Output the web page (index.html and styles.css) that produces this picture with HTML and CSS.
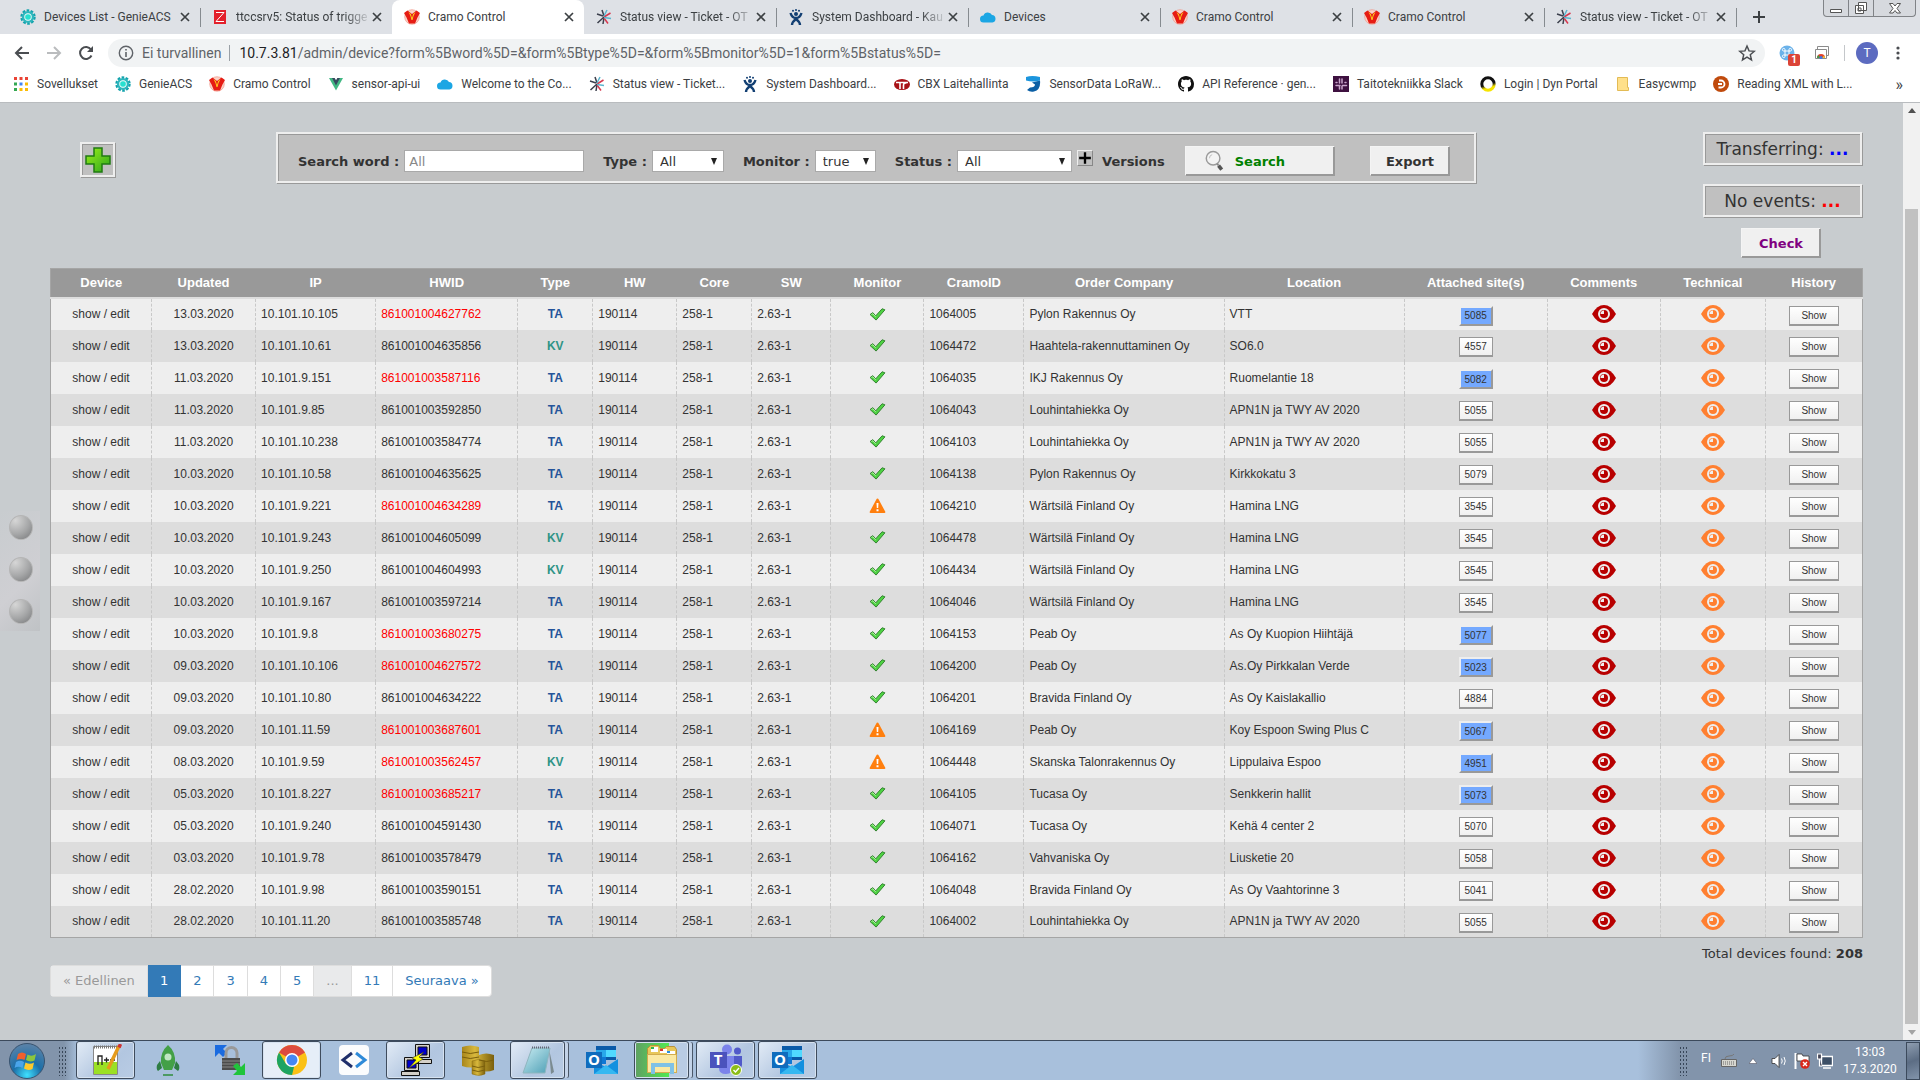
FILE: index.html
```html
<!DOCTYPE html>
<html lang="fi">
<head>
<meta charset="utf-8">
<title>Cramo Control</title>
<link rel="stylesheet" href="styles.css">
</head>
<body>
<svg class="sprite" aria-hidden="true">
  <defs>
    <linearGradient id="g-green" x1="0" y1="0" x2="1" y2="1"><stop offset="0" stop-color="#9bef1a"/><stop offset="1" stop-color="#2ba51c"/></linearGradient>
    <linearGradient id="g-gold" x1="0" y1="0" x2="1" y2="0"><stop offset="0" stop-color="#a8861c"/><stop offset=".4" stop-color="#d9b93c"/><stop offset="1" stop-color="#7a5f0c"/></linearGradient>
    <linearGradient id="g-note" x1="0" y1="0" x2="1" y2="1"><stop offset="0" stop-color="#c9ecf2"/><stop offset="1" stop-color="#4d9fb5"/></linearGradient>
    <radialGradient id="g-orb" cx=".5" cy=".9" r=".9"><stop offset="0" stop-color="#3fe0ff"/><stop offset=".45" stop-color="#1b6fa8"/><stop offset="1" stop-color="#5d83a8"/></radialGradient>
    <linearGradient id="g-dyn" x1=".7" y1="0" x2="1" y2="1"><stop offset=".45" stop-color="#111"/><stop offset=".7" stop-color="#f6e400"/></linearGradient>
  </defs>
  <symbol id="i-gear" viewBox="0 0 16 16"><circle cx="8" cy="8" r="6.400" fill="none" stroke="#14a3ad" stroke-width="2.600" stroke-dasharray="2.600 1.400"/><circle cx="8" cy="8" r="4.800" fill="none" stroke="#2fb6bd" stroke-width="2.600"/><circle cx="8" cy="8" r="3.700" fill="#d8f6f4"/><circle cx="8" cy="8" r="2.800" fill="#27e0d0"/></symbol>
  <symbol id="i-zabbix" viewBox="0 0 16 16"><path fill="#e3202b" d="M2 1h12v14H2z"/><path d="M4 3.500h8l-8 9h8" fill="none" stroke="#fff" stroke-width="1"/></symbol>
  <symbol id="i-cramo" viewBox="0 0 16 16"><circle cx="8" cy="8" r="7.300" fill="#fbd3c8" stroke="#f08b7c" stroke-width=".6"/><path fill="#e61c14" d="M0 4l3.500-2.500L8 5l4.500-3.500L16 4l-2.500 4.500L11 14.500H5L2.500 8.500z"/><path fill="#ffd21e" d="M4.500 3L8 6l3.500-3-2 4L8.500 11h-1L6.500 7z"/><path fill="#e61c14" d="M6.800 5h2.400L8 9z"/></symbol>
  <symbol id="i-otrs" viewBox="0 0 16 16"><g fill="none" stroke-width="1.500"><path stroke="#3b3f4c" d="M8 7L6 1M8 8L1.500 14M8 8.500L7 15M7 7L1 5"/><path stroke="#d63a50" d="M8 8l6.500-4M8 9l4 5.500"/><path stroke="#5cb6cf" d="M8 7l3-6M8 8.500l7 1"/></g></symbol>
  <symbol id="i-jira" viewBox="0 0 16 16"><g fill="none" stroke="#123f73" stroke-width="2.400"><path d="M2.500 4q1.500 5 5.500 5t5.500-5M4 16q0-3 4-6 4 3 4 6"/></g><g fill="#123f73"><circle cx="8" cy="5" r="2"/><circle cx="5" cy="1.800" r="1"/><circle cx="8" cy="1" r="1"/><circle cx="11" cy="1.800" r="1"/></g></symbol>
  <symbol id="i-cloud" viewBox="0 0 16 16"><path fill="#1ba6e4" d="M3.500 13.500a3.500 3.500 0 010-7A4.600 4.600 0 0112 6a3.800 3.800 0 01.5 7.500z"/></symbol>
  <symbol id="i-vue" viewBox="0 0 16 16"><path fill="#41b883" d="M1 2h14L8 14.500z"/><path fill="#35495e" d="M4 2h8L8 9.500z"/><path fill="#fff" d="M6.700 2h2.600L8 4.200z"/></symbol>
  <symbol id="i-apps" viewBox="0 0 16 16"><g fill="#ea4335"><path d="M1 1h3v3H1zM6.500 1h3v3h-3zM12 1h3v3h-3z"/></g><path fill="#34a853" d="M1 6.500h3v3H1zM1 12h3v3H1z"/><path fill="#4285f4" d="M6.500 6.500h3v3h-3z"/><path fill="#fbbc05" d="M12 6.500h3v3h-3zM6.500 12h3v3h-3zM12 12h3v3h-3z"/></symbol>
  <symbol id="i-cbx" viewBox="0 0 16 16"><ellipse cx="8" cy="8.500" rx="8" ry="5.500" fill="#a81216"/><path fill="none" stroke="#fff" stroke-width="1.600" d="M2 6.500h12M6 6.500V13M9.500 13V9.500q0-3 3-2.500"/></symbol>
  <symbol id="i-sensor" viewBox="0 0 16 16"><path fill="#1b95dd" d="M1 1q6-2 14 0v3.500Q8 6.500 1 4.500z"/><path fill="#0b5fa5" d="M7 6.500l8-2q1 9-6 11-4 .8-7-1.500l3-2.500q5 0 5-3z"/></symbol>
  <symbol id="i-github" viewBox="0 0 16 16"><path fill="#111" d="M8 0C3.580 0 0 3.580 0 8c0 3.540 2.290 6.530 5.470 7.590.4.070.55-.17.55-.38 0-.19-.01-.82-.01-1.490-2.010.37-2.530-.49-2.690-.94-.09-.23-.48-.94-.82-1.130-.28-.15-.68-.52-.01-.53.63-.01 1.080.58 1.230.82.72 1.210 1.870.87 2.330.66.07-.52.28-.87.51-1.070-1.780-.2-3.640-.89-3.640-3.950 0-.87.31-1.590.82-2.150-.08-.2-.36-1.020.08-2.120 0 0 .67-.21 2.200.82.64-.18 1.320-.27 2-.27s1.360.09 2 .27c1.530-1.040 2.200-.82 2.200-.82.44 1.100.16 1.920.08 2.120.51.56.82 1.270.82 2.150 0 3.070-1.870 3.750-3.650 3.950.29.25.54.73.54 1.480 0 1.070-.01 1.930-.01 2.200 0 .21.15.46.55.38A8.010 8.010 0 0016 8c0-4.420-3.580-8-8-8z"/></symbol>
  <symbol id="i-slack" viewBox="0 0 16 16"><path fill="#3e1140" d="M0 0h16v16H0z"/><g stroke="#c9a5cb" stroke-width="1.500" stroke-linecap="round"><path d="M6.500 3v4M3 6.500h1M9 3v4M12 6.500h1M6.500 10v3M3 9.500h4M9.500 9.500h4M9 10v3"/></g></symbol>
  <symbol id="i-dyn" viewBox="0 0 16 16"><circle cx="8" cy="8" r="6.200" fill="#fff" stroke="url(#g-dyn)" stroke-width="3"/></symbol>
  <symbol id="i-folder" viewBox="0 0 16 16"><path fill="#ffe08a" stroke="#e3bb55" d="M2.500 1.500h10v10h1v3h-11z"/></symbol>
  <symbol id="i-dz" viewBox="0 0 16 16"><circle cx="8" cy="8" r="8" fill="#c04a0c"/><path fill="none" stroke="#fff" stroke-width="1.800" d="M6 4.500h2a3.500 3.500 0 010 7H5.500M5 8h4"/></symbol>
  <symbol id="i-x" viewBox="0 0 10 10"><path d="M1 1l8 8M9 1L1 9" stroke="#3c4043" stroke-width="1.700"/></symbol>
  <symbol id="i-check" viewBox="0 0 18 14"><path d="M1 7l3-2 3 3.500L14 .8l3 1.200L7.500 13z" fill="#4fd243" stroke="#2b7d28" stroke-width="1"/><path d="M2.500 7l1.500-.8L7 9.500" fill="none" stroke="#b8f5a8" stroke-width="1"/></symbol>
  <symbol id="i-warn" viewBox="0 0 16 16"><path fill="#ff7f0e" d="M8 .5q.8 0 1.200.9l6.600 12.400q.3 1.200-.9 1.200H1.100q-1.200 0-.9-1.200L6.800 1.400Q7.200.5 8 .5z"/><path fill="#fff" d="M7 5h2l-.3 5H7.300zM7 11.200h2v2H7z"/></symbol>
  <symbol id="i-eye" viewBox="0 0 24 18"><path fill="currentColor" d="M0 9Q5 0 12 0t12 9q-5 9-12 9T0 9z"/><circle cx="12" cy="9" r="6" fill="#eee"/><circle cx="12" cy="9" r="4" fill="currentColor"/><path fill="#eee" d="M12 9V5.500A3.500 3.500 0 008.500 9z"/></symbol>
  <symbol id="i-outlook" viewBox="0 0 32 30"><path fill="#0a5aa8" d="M10 1h20v14H10z"/><path fill="#28a8ea" d="M10 5h10v7H10z"/><path fill="#50d9ff" d="M20 5h10v7H20z"/><path fill="#0f78d4" d="M10 12h10v7H10z"/><path fill="#1490df" d="M8 16l12 6 12-8v15H8z"/><path fill="#35b8f1" d="M8 29l12-9 12 9z"/><path fill="#0f6cbd" d="M0 7h16v16H0z"/></symbol>
</svg>

<header class="chrome">
  <div class="tabstrip">
    <ul class="tabs">
      <li class="tab"><svg class="ico"><use href="#i-gear"/></svg><span class="tab-name">Devices List - GenieACS</span><button class="close" aria-label="Close tab"><svg><use href="#i-x"/></svg></button></li>
      <li class="tab"><svg class="ico"><use href="#i-zabbix"/></svg><span class="tab-name fade">ttccsrv5: Status of trigge</span><button class="close" aria-label="Close tab"><svg><use href="#i-x"/></svg></button></li>
      <li class="tab tab-active"><svg class="ico"><use href="#i-cramo"/></svg><span class="tab-name">Cramo Control</span><button class="close" aria-label="Close tab"><svg><use href="#i-x"/></svg></button></li>
      <li class="tab"><svg class="ico"><use href="#i-otrs"/></svg><span class="tab-name fade">Status view - Ticket - OT</span><button class="close" aria-label="Close tab"><svg><use href="#i-x"/></svg></button></li>
      <li class="tab"><svg class="ico"><use href="#i-jira"/></svg><span class="tab-name fade">System Dashboard - Kau</span><button class="close" aria-label="Close tab"><svg><use href="#i-x"/></svg></button></li>
      <li class="tab"><svg class="ico"><use href="#i-cloud"/></svg><span class="tab-name">Devices</span><button class="close" aria-label="Close tab"><svg><use href="#i-x"/></svg></button></li>
      <li class="tab"><svg class="ico"><use href="#i-cramo"/></svg><span class="tab-name">Cramo Control</span><button class="close" aria-label="Close tab"><svg><use href="#i-x"/></svg></button></li>
      <li class="tab"><svg class="ico"><use href="#i-cramo"/></svg><span class="tab-name">Cramo Control</span><button class="close" aria-label="Close tab"><svg><use href="#i-x"/></svg></button></li>
      <li class="tab"><svg class="ico"><use href="#i-otrs"/></svg><span class="tab-name fade">Status view - Ticket - OT</span><button class="close" aria-label="Close tab"><svg><use href="#i-x"/></svg></button></li>
    </ul>
    <button class="newtab" aria-label="New tab"><svg viewBox="0 0 12 12"><path d="M6 0v12M0 6h12" stroke="#3c4043" stroke-width="2"/></svg></button>
    <div class="wincontrols">
      <button aria-label="Minimize"><svg viewBox="0 0 14 14"><path d="M1.500 8.500h11v3h-11z" fill="#fff" stroke="#555"/></svg></button>
      <button aria-label="Restore"><svg viewBox="0 0 14 14"><path d="M4.500 1.500h8v8h-8zM1.500 4.500h8v8h-8z" fill="#fff" stroke="#555"/><path d="M4 7h3v3H4z" fill="none" stroke="#555"/></svg></button>
      <button class="winclose" aria-label="Close"><svg viewBox="0 0 14 14"><path d="M1.500 2.500h3.500l2 2.500 2-2.500h3.500L9 7.500l3.500 4.500H9L7 9.500 5 12H1.500L5 7.500z" fill="#fff" stroke="#555"/></svg></button>
    </div>
  </div>
  <div class="toolbar">
    <button class="nav" aria-label="Back"><svg viewBox="0 0 16 16"><path d="M15 8H2M8 2L2 8l6 6" fill="none" stroke="#4a4d51" stroke-width="2"/></svg></button>
    <button class="nav" aria-label="Forward"><svg viewBox="0 0 16 16"><path d="M1 8h13M8 2l6 6-6 6" fill="none" stroke="#babcbe" stroke-width="2"/></svg></button>
    <button class="nav" aria-label="Reload"><svg viewBox="0 0 16 16"><path d="M13.500 10.500A6 6 0 1113 4.500" fill="none" stroke="#4a4d51" stroke-width="2"/><path fill="#4a4d51" d="M15 1v6H9z"/></svg></button>
    <div class="omnibox">
      <svg class="info" viewBox="0 0 16 16"><circle cx="8" cy="8" r="6.700" fill="none" stroke="#5f6368" stroke-width="1.400"/><path d="M7.200 7h1.600v5H7.200zM7.200 4h1.600v1.600H7.200z" fill="#5f6368"/></svg>
      <span class="secure">Ei turvallinen</span>
      <span class="url"><b>10.7.3.81</b>/admin/device?form%5Bword%5D=&amp;form%5Btype%5D=&amp;form%5Bmonitor%5D=1&amp;form%5Bstatus%5D=</span>
      <button class="star" aria-label="Bookmark"><svg viewBox="0 0 16 16"><path d="M8 1.800l1.800 4.300 4.700.4-3.600 3 1.100 4.600L8 11.700l-4 2.400 1.100-4.600-3.600-3 4.700-.4z" fill="none" stroke="#4a4d51" stroke-width="1.300"/></svg></button>
    </div>
    <button class="ext" aria-label="Extension"><svg viewBox="0 0 16 16"><circle cx="8" cy="8" r="7.500" fill="#6bb2ea"/><path d="M6 6h4v4H6zM6 6H4.500A1.300 1.300 0 116 4.500zM10 6V4.500A1.300 1.300 0 1111.500 6zM10 10h1.500a1.300 1.300 0 11-1.500 1.500zM6 10v1.500A1.300 1.300 0 114.500 10z" fill="none" stroke="#fff"/></svg><span class="badge">1</span></button>
    <button class="ext" aria-label="Capture"><svg viewBox="0 0 16 16"><path d="M3.500 1.500h11v9h-11z" fill="#fff" stroke="#8b8b8b"/><path d="M1.500 4.500h11v9h-11z" fill="#fff" stroke="#8b8b8b"/><path d="M3 13a4 4 0 018 0z" fill="#e0432f"/><path d="M3 13a4 4 0 011.500-3L6 13z" fill="#3c9f4a"/><path d="M11 13a4 4 0 00-1-2.500L8 13z" fill="#f3c12b"/><circle cx="7" cy="12.500" r="1.500" fill="#3b78e7"/></svg></button>
    <span class="divider"></span>
    <button class="avatar">T</button>
    <button class="ext" aria-label="Menu"><svg viewBox="0 0 16 16"><g fill="#4a4d51"><circle cx="8" cy="3" r="1.600"/><circle cx="8" cy="8" r="1.600"/><circle cx="8" cy="13" r="1.600"/></g></svg></button>
  </div>
  <nav class="bookmarks">
    <a href="#"><svg class="ico"><use href="#i-apps"/></svg>Sovellukset</a>
    <a href="#"><svg class="ico"><use href="#i-gear"/></svg>GenieACS</a>
    <a href="#"><svg class="ico"><use href="#i-cramo"/></svg>Cramo Control</a>
    <a href="#"><svg class="ico"><use href="#i-vue"/></svg>sensor-api-ui</a>
    <a href="#"><svg class="ico"><use href="#i-cloud"/></svg>Welcome to the Co...</a>
    <a href="#"><svg class="ico"><use href="#i-otrs"/></svg>Status view - Ticket...</a>
    <a href="#"><svg class="ico"><use href="#i-jira"/></svg>System Dashboard...</a>
    <a href="#"><svg class="ico"><use href="#i-cbx"/></svg>CBX Laitehallinta</a>
    <a href="#"><svg class="ico"><use href="#i-sensor"/></svg>SensorData LoRaW...</a>
    <a href="#"><svg class="ico"><use href="#i-github"/></svg>API Reference · gen...</a>
    <a href="#"><svg class="ico"><use href="#i-slack"/></svg>Taitotekniikka Slack</a>
    <a href="#"><svg class="ico"><use href="#i-dyn"/></svg>Login | Dyn Portal</a>
    <a href="#"><svg class="ico"><use href="#i-folder"/></svg>Easycwmp</a>
    <a href="#"><svg class="ico"><use href="#i-dz"/></svg>Reading XML with L...</a>
    <button class="more" aria-label="More bookmarks">»</button>
  </nav>
</header>

<div class="viewport">
  <main class="page">
    <div class="top">
      <a class="add ridge" href="#" aria-label="Add device"><svg viewBox="0 0 26 26"><path d="M9 1h8v8h8v8h-8v8H9v-8H1V9h8z" fill="url(#g-green)" stroke="#1f7a12" stroke-width="1.500"/></svg></a>
      <form class="filters ridge">
        <label for="word">Search word :</label><input id="word" class="field word" type="text" placeholder="All">
        <label for="type">Type :</label><select id="type" class="field type"><option>All</option></select>
        <label for="monitor">Monitor :</label><select id="monitor" class="field monitor"><option>true</option></select>
        <label for="status">Status :</label><select id="status" class="field status"><option>All</option></select>
        <button class="plus" type="button" aria-label="Show versions"><svg viewBox="0 0 12 12"><path d="M6 1v10M1 6h10" stroke="#000" stroke-width="2"/></svg></button>
        <span class="versions">Versions</span>
        <button class="btn search" type="button"><svg viewBox="0 0 22 24"><circle cx="10" cy="9" r="7.500" fill="#f4f4f4" stroke="#9a9a9a" stroke-width="1.600"/><path d="M6 9a4 4 0 013-4" stroke="#bbb" fill="none"/><path d="M14.500 15l1.500 2" stroke="#888" stroke-width="2"/><path d="M16 17l3.500 4.500" stroke="#555" stroke-width="4"/></svg>Search</button>
        <button class="btn export" type="button">Export</button>
      </form>
      <aside class="side">
        <div class="stat ridge">Transferring: <b class="blue">...</b></div>
        <div class="stat ridge">No events: <b class="red">...</b></div>
        <button class="btn check" type="button">Check</button>
      </aside>
    </div>
    <table class="devices">
      <colgroup><col class="w101"><col class="w104"><col class="w120"><col class="w142"><col class="w75"><col class="w84"><col class="w75"><col class="w79"><col class="w93"><col class="w100"><col class="w200"><col class="w180"><col class="w143"><col class="w113"><col class="w105"><col class="w97"></colgroup>
      <thead><tr><th>Device</th><th>Updated</th><th>IP</th><th>HWID</th><th>Type</th><th>HW</th><th>Core</th><th>SW</th><th>Monitor</th><th>CramoID</th><th>Order Company</th><th>Location</th><th>Attached site(s)</th><th>Comments</th><th>Technical</th><th>History</th></tr></thead>
      <tbody id="rows"></tbody>
    </table>
    <div class="total">Total devices found: <b>208</b></div>
    <nav class="pager" aria-label="Pages">
      <span class="off">« Edellinen</span><a class="on" href="#">1</a><a href="#">2</a><a href="#">3</a><a href="#">4</a><a href="#">5</a><span class="off">...</span><a href="#">11</a><a href="#">Seuraava »</a>
    </nav>
    <div class="rivets"><i></i><i></i><i></i></div>
  </main>
  <div class="scroll"><i class="up"></i><div class="thumb"></div><i class="down"></i></div>
</div>

<footer class="taskbar">
  <button class="orb" aria-label="Start"><svg viewBox="0 0 36 36"><circle cx="18" cy="18" r="17.500" fill="url(#g-orb)" stroke="#39536f"/><path fill="#f0602c" d="M9 11q4-3 8 0l-1.500 6q-4-2-8 0z"/><path fill="#8cc63e" d="M18.500 11.500q4 2.500 8.500-.5l-1.500 6.500q-4.500 2-8.500-.5z"/><path fill="#4aa5ea" d="M7 19q4-2.500 8 0l-1.500 6q-4-2.500-8 0z"/><path fill="#fdc92c" d="M16.500 19.500q4.500 2.500 8.500 0L23.500 26q-4.500 2-8.500-.5z"/></svg></button>
  <i class="grip"></i>
  <div class="tasks">
    <button class="task open" aria-label="Notepad++"><svg viewBox="0 0 32 32"><path fill="#fff" stroke="#888" d="M3.500 2.500h24v28h-24z"/><path d="M4 18l23 0v12H4z" fill="#9be024"/><path d="M4 3h24" stroke="#777" stroke-width="3" stroke-dasharray="1 1"/><path d="M8 21v-9h4v9M14 16h5M16.500 13.500v5M20 16h5M22.500 13.500v5" fill="none" stroke="#222" stroke-width="1.300"/><path d="M29 2L18 25" stroke="#e59b1c" stroke-width="3.500"/><path d="M30.500 0L29 3.500" stroke="#c33" stroke-width="3.500"/></svg></button>
    <button class="task" aria-label="Rocket"><svg viewBox="0 0 32 32"><path fill="#43a047" d="M16 1q8 7 7 18l-3 7h-8l-3-7Q8 8 16 1z"/><path fill="#2e7d43" d="M8 17l-3 4q-1 4 1 6l4-3zM24 17l3 4q1 4-1 6l-4-3z"/><circle cx="16" cy="13" r="3.500" fill="#bfe6c2"/><path stroke="#4d9a63" stroke-width="2" d="M11 31h10"/></svg></button>
    <button class="task" aria-label="WinSCP"><svg viewBox="0 0 32 32"><path fill="#1a6be0" d="M1 1h12l-4 4 4 4-4 4-4-4-4 4z"/><path d="M12 16V9a5 5 0 0111 0v7" fill="none" stroke="#999" stroke-width="3"/><path fill="#4c4c4c" d="M8 14h18v12H8z"/><path stroke="#888" d="M8 17h18M8 20h18M8 23h18"/><path fill="#1fc43a" d="M31 31H19l4-4-4-5 4-3 4 4 4-4z"/></svg></button>
    <button class="task open lit" aria-label="Chrome"><svg viewBox="0 0 32 32"><circle cx="16" cy="16" r="15" fill="#fbc116"/><path fill="#dd4b3e" d="M16 16L3 8.500a15 15 0 0126 0z"/><path fill="#1da462" d="M16 31A15 15 0 013 8.500L10 20l8 3z"/><circle cx="16" cy="16" r="7" fill="#fff"/><circle cx="16" cy="16" r="5.500" fill="#4587f3"/></svg></button>
    <button class="task" aria-label="Code"><svg viewBox="0 0 32 32"><rect x="1" y="1" width="30" height="30" rx="4" fill="#fbfcfd"/><path d="M14 9l-9 7 9 7" fill="none" stroke="#1f2f6b" stroke-width="3"/><path d="M18 9l9 7-9 7" fill="none" stroke="#2e8ad8" stroke-width="3"/></svg></button>
    <button class="task open" aria-label="PuTTY"><svg viewBox="0 0 32 32"><g fill="#d4d0c8" stroke="#111"><path d="M15.500.5h14v13h-14zM4.500 13.500h14v13h-14zM13.500 15.500h18v4h-18zM1.500 27.500h18v4h-18z"/></g><path fill="#00c" stroke="#111" d="M18 3h9v8h-9zM7 16h9v8H7z"/><path fill="#ff0" stroke="#333" stroke-width=".6" d="M24 8L12 14l4 2-7 8 14-9-4-2z"/></svg></button>
    <button class="task" aria-label="Database"><svg viewBox="0 0 32 32"><path fill="url(#g-gold)" d="M0 3q8-3 17 0v19q-8 3-17 0zM17 11q7-3 15 0v15q-8 3-15 0z"/><path fill="url(#g-gold)" stroke="#8a6d12" stroke-width=".5" d="M10 17q6-3 13 0v13q-6 3-13 0z"/><path stroke="#7a5f0c" fill="none" d="M0 8q8 3 17 0M0 13q8 3 17 0M10 22q6 3 13 0M10 26q6 3 13 0M17 16q8 3 15 0"/></svg></button>
    <button class="task open stack" aria-label="Notepad"><svg viewBox="0 0 32 32"><path fill="#7b8b90" d="M27 5l5 23-3 2z"/><path fill="url(#g-note)" stroke="#8fb6bf" d="M10 4h18l-5 25H1z"/><path stroke="#667" stroke-width="2" stroke-dasharray="1 1" d="M10 3.500h18"/></svg></button>
    <button class="task" aria-label="Outlook"><svg viewBox="0 0 32 30"><use href="#i-outlook"/><text x="8" y="20" class="logo-letter">O</text></svg></button>
    <button class="task open busy stack" aria-label="Explorer"><svg viewBox="0 0 32 32"><path fill="#e8c75a" stroke="#b9923a" d="M1.500 4.500l3-3h8l2 3h4l2-2h8l2 3v23h-29z"/><path fill="#fff" d="M5 3h7v5H5zM14 5h7v4h-7zM21 7h8v4h-8z"/><path fill="#2eb34c" d="M5 3h3v2H5z"/><path fill="#d8362c" d="M14 5h3v2h-3z"/><path fill="#2b8fe0" d="M21 7h3v2h-3z"/><path fill="#fbe9a3" stroke="#d3ad4e" d="M1.500 10.500l29 0v18h-29z"/><path fill="none" stroke="#7fc1e6" stroke-width="4" d="M7 30v-9h19v9"/></svg></button>
    <button class="task open" aria-label="Teams"><svg viewBox="0 0 32 32"><circle cx="17" cy="5.500" r="5" fill="#7b83eb"/><circle cx="27.500" cy="7" r="3.500" fill="#5059c9"/><path fill="#5059c9" d="M22 12h10v9q-1 6-6 6z"/><path fill="#7b83eb" d="M10 12h14v10q-1 8-8 8t-7-6z"/><path fill="#4b53bc" d="M0 8h17v16H0z"/><text x="8" y="21" class="logo-letter">T</text><circle cx="26" cy="26" r="5.500" fill="#8cbd18" stroke="#fff"/><path d="M23.500 26l2 2 3.500-4" fill="none" stroke="#fff" stroke-width="1.400"/></svg></button>
    <button class="task open" aria-label="Outlook mail"><svg viewBox="0 0 32 30"><use href="#i-outlook"/><text x="8" y="20" class="logo-letter">O</text></svg></button>
  </div>
  <div class="tray">
    <i class="grip"></i>
    <span class="lang">FI</span>
    <svg class="kbd" viewBox="0 0 16 14"><path d="M4 5q0-3 4-3t5-2" fill="none" stroke="#777"/><path d="M.5 5.500h15v7H.5z" fill="#d7d7d0" stroke="#666"/><path d="M2 8h12M2 10h12" stroke="#666" stroke-dasharray="1 1"/></svg>
    <svg class="arrow" viewBox="0 0 8 6"><path d="M4 .5L8 5.500H0z" fill="#fff" stroke="#445" stroke-width=".5"/></svg>
    <svg class="tico" viewBox="0 0 16 16"><path d="M1 5.500h3l4-4v13l-4-4H1z" fill="#fff" stroke="#333" stroke-width=".8"/><path d="M10.500 5.500q1.500 2.500 0 5M13 4q2.500 4 0 8" fill="none" stroke="#fff"/></svg>
    <svg class="tico" viewBox="0 0 16 16"><path d="M1.500 0v16" stroke="#fff" stroke-width="2"/><path d="M3 1h5l1 2h6v7H9L8 8H3z" fill="#fff" stroke="#333" stroke-width=".8"/><circle cx="11" cy="11" r="4.800" fill="#d8281c"/><path d="M9 9l4 4M13 9l-4 4" stroke="#fff" stroke-width="1.400"/></svg>
    <svg class="tico" viewBox="0 0 16 16"><path d="M4.500 3.500h11v9h-11z" fill="#3d4f66" stroke="#fff" stroke-width="1.400"/><path d="M6 15h8" stroke="#fff" stroke-width="1.500"/><path d="M.5 1h4v5h-4zM2.500 6v7H5" fill="#445" stroke="#fff" stroke-width="1.200"/></svg>
    <div class="clock"><span>13:03</span><span>17.3.2020</span></div>
    <button class="desk" aria-label="Show desktop"></button>
  </div>
</footer>
<script src="script.js"></script>
</body>
</html>
```
FILE: styles.css
```css
* { box-sizing: border-box; }
html, body { height: 100%; margin: 0; }
body {
  display: flex;
  flex-direction: column;
  overflow: hidden;
  font-family: "DejaVu Sans", Verdana, sans-serif;
  color: #333;
  background: #c8cccf;
}
button { padding: 0; border: 0; background: none; font: inherit; color: inherit; }
a { color: inherit; text-decoration: none; }
svg { display: block; }
ul { margin: 0; padding: 0; list-style: none; }
.sprite { position: absolute; width: 0; height: 0; }
.ico { width: 16px; height: 16px; flex: none; }

/* Browser window */
.chrome { flex: none; font-family: Roboto, "Open Sans", sans-serif; font-size: 12px; color: #3c4043; background: #fff; border-bottom: 1px solid #b9bcbf; }
.tabstrip { display: flex; height: 34px; padding-left: 8px; background: #dee1e6; }
.tabs { display: flex; }
.tab { position: relative; display: flex; align-items: center; width: 192px; padding: 0 10px 0 12px; }
.tab::after { content: ""; position: absolute; right: -1px; top: 8px; width: 1px; height: 19px; background: #868b90; }
.tab:has(+ .tab-active)::after, .tab-active::after { display: none; }
.tab-active { background: #fff; border-radius: 8px 8px 0 0; }
.tab-name { flex: 1; margin-left: 8px; white-space: nowrap; }
.fade { -webkit-mask-image: linear-gradient(to right, #000 108px, transparent 136px); mask-image: linear-gradient(to right, #000 108px, transparent 136px); }
.close { width: 10px; height: 10px; }
.close svg { width: 10px; height: 10px; }
.newtab { width: 12px; margin-left: 17px; }
.newtab svg { width: 12px; height: 12px; }
.wincontrols { display: flex; height: 17px; margin: 0 4px 0 auto; border: 1px solid #808387; border-top: 0; border-radius: 0 0 4px 4px; background: #d6d9de; }
.wincontrols button { display: flex; align-items: center; justify-content: center; width: 25px; border-right: 1px solid #808387; }
.wincontrols .winclose { width: 41px; border: 0; }
.wincontrols svg { width: 14px; height: 14px; }

.toolbar { display: flex; align-items: center; height: 37px; padding-right: 14px; }
.nav { width: 16px; margin-left: 16px; }
.nav:first-child { margin-left: 14px; }
.nav svg { width: 16px; height: 16px; }
.omnibox { display: flex; flex: 1; align-items: center; height: 28px; margin: 0 14px 0 14px; padding: 0 9px 0 10px; border-radius: 14px; background: #f1f3f4; font-size: 14px; color: #5f6368; }
.info { width: 16px; height: 16px; margin-right: 8px; }
.secure { padding-right: 8px; border-right: 1px solid #9aa0a6; }
.url { flex: 1; margin-left: 9px; }
.url b { font-weight: 400; color: #202124; }
.star svg { width: 18px; height: 18px; }
.ext { position: relative; width: 16px; margin: 0 11px 0 0; }
.ext:last-child { margin: 0 0 0 12px; }
.ext + .ext { margin: 0 14px 0 8px; }
.ext svg { width: 16px; height: 16px; }
.badge { position: absolute; left: 9px; top: 9px; width: 12px; border-radius: 2px; background: #db4437; color: #fff; font-size: 10px; font-weight: 700; line-height: 12px; }
.divider { width: 1px; height: 16px; background: #c4c7ca; margin-right: 11px; }
.avatar { width: 22px; height: 22px; border-radius: 50%; background: #5c6bc0; color: #fff; }

.bookmarks { display: flex; align-items: center; gap: 17px; height: 31px; padding: 0 17px 5px 13px; white-space: nowrap; }
.bookmarks a { display: flex; align-items: center; gap: 8px; }
.more { margin-left: auto; font-size: 16px; }

/* Page */
.viewport { display: flex; flex: 1; min-height: 0; }
.page { position: relative; flex: 1; padding: 29px 40px 0 50px; font-size: 13px; }
.ridge { border: 2px solid #eee; background: #c0c0c0; box-shadow: 1px 1px 0 #999, inset 1px 1px 0 #999; }
.top { display: flex; align-items: flex-start; justify-content: space-between; height: 136px; }
.add { display: flex; align-items: center; justify-content: center; width: 35px; height: 35px; margin: 10px 0 0 30px; }
.add svg { width: 26px; height: 26px; }
.filters { display: flex; align-items: center; width: 1200px; height: 51px; padding: 7px 24px 0 20px; font-weight: 700; margin-left: -66px; }
.field { height: 22px; margin-right: 19px; margin-left: 5px; padding: 0 4px; border: 1px solid #a9a9a9; border-radius: 0; background: #fff; font: 13px "DejaVu Sans", Verdana, sans-serif; color: #333; }
.field::placeholder { color: #888; }
select.field { appearance: none; padding-left: 7px; background: #fff url('data:image/svg+xml,<svg xmlns="http://www.w3.org/2000/svg" width="6" height="7"><path d="M0 0h6L3 7z" fill="%23222"/></svg>') no-repeat right 6px center; }
.word { width: 180px; }
.type { width: 72px; }
.monitor { width: 61px; }
.status { width: 115px; margin-right: 5px; }
.plus { width: 16px; height: 16px; margin: 0 9px 6px 0; border: 1px solid; border-color: #eee #888 #888 #eee; }
.plus svg { width: 14px; height: 14px; }
.btn { height: 30px; border: 1px solid; border-color: #f4f4f4 #999 #999 #f4f4f4; box-shadow: inset -1px -1px 0 #999; background: #f0f0f0; font-size: 13px; font-weight: 700; }
.search { display: flex; align-items: center; gap: 11px; width: 150px; margin-left: 20px; padding-left: 18px; color: green; }
.search svg { width: 20px; height: 22px; }
.export { width: 80px; margin-left: auto; }
.side { display: flex; flex-direction: column; align-items: flex-end; width: 160px; }
.stat { width: 159px; height: 33px; margin: 0 1px 19px 0; font-size: 17px; line-height: 31px; text-align: center; }
.stat + .stat { margin-bottom: 11px; }
.blue { color: #00f; }
.red { color: red; }
.check { width: 80px; margin-right: 42px; color: purple; }

.devices { width: 100%; table-layout: fixed; border-collapse: collapse; border: 1px solid #a5a5a5; font-family: "Liberation Sans", Arial, sans-serif; font-size: 12px; }
.w75 { width: 75px; } .w79 { width: 79px; } .w84 { width: 84px; } .w93 { width: 93px; } .w97 { width: 97px; }
.w100 { width: 100px; } .w101 { width: 101px; } .w104 { width: 104px; } .w105 { width: 105px; } .w113 { width: 113px; }
.w120 { width: 120px; } .w142 { width: 142px; } .w143 { width: 143px; } .w180 { width: 180px; } .w200 { width: 200px; }
.devices th { height: 29px; padding: 0; background: #999; color: #fff; border-bottom: 2px solid #ddd; font-size: 13px; }
.devices td { height: 32px; padding: 0 5px; border-right: 1px dashed #c8c8c8; white-space: nowrap; }
.devices td:last-child { border-right: 0; }
.devices tbody tr { background: #eee; }
.devices tbody tr:nth-child(even) { background: #ddd; }
.devices .mid { text-align: center; }
.devices td svg { margin: 0 auto; }
.hot { color: red; }
.ta { color: #25549a; }
.kv { color: #2f9486; }
.yes { width: 17px; height: 13px; }
.warn { width: 17px; height: 16px; }
.eye { width: 24px; height: 18px; }
.comment { color: #b80000; }
.tech { color: #ff7f30; }
.mini { height: 20px; margin-top: 3px; border: 1px solid #999; border-bottom-width: 2px; background: linear-gradient(#fff, #f0f0f0); font-size: 10px; }
.site { width: 34px; }
.show { width: 50px; }
.linked { border: 2px solid; border-color: #eee #999 #999 #eee; background: #74a9ff; }

.total { margin-top: 7px; text-align: right; line-height: 18px; }
.pager { display: flex; width: max-content; margin-top: 2px; border: 1px solid #ddd; border-radius: 4px; background: #fff; color: #337ab7; line-height: 30px; }
.pager > * { padding: 0 12px; border-right: 1px solid #ddd; }
.pager > :last-child { border-right: 0; }
.pager .off { background: #e9eaeb; color: #999; }
.pager .on { margin: -1px 0; background: #337ab7; border-color: #337ab7; color: #fff; line-height: 32px; }
.rivets { position: absolute; left: 0; top: 408px; display: flex; flex-direction: column; justify-content: space-between; width: 40px; height: 120px; padding: 4px 8px 7px 9px; background: linear-gradient(135deg, #c8cccf, #cfcfd3 60%, #bfc2c5); }
.rivets i { width: 24px; height: 25px; border-radius: 50%; border: 1px solid #b5b5b5; background: radial-gradient(circle at 25% 20%, #d6d6d6, #a6a7a8 55%, #77787a); }

.scroll { display: flex; flex-direction: column; align-items: center; width: 17px; padding: 5px 0; background: #f1f1f1; }
.scroll .up, .scroll .down { border: 4px solid transparent; border-top: 0; border-bottom: 5px solid #505050; }
.scroll .down { border-bottom: 0; border-top: 5px solid #a3a3a3; margin-top: auto; }
.thumb { flex: 1; width: 13px; margin: 96px 0 6px; background: #c1c1c1; }

/* Taskbar */
.taskbar { display: flex; flex: none; height: 40px; border-top: 1px solid #3c4a5c; background: linear-gradient(90deg, #8294ab 64px, #a8c0dc 78px, #a8c0dc calc(100% - 282px), #8294ab calc(100% - 240px)); }
.orb { width: 36px; margin-left: 9px; }
.orb svg { width: 36px; height: 36px; }
.grip { flex: none; width: 10px; height: 30px; background: radial-gradient(circle, #38475a 1px, transparent 1px) 0 0 / 3px 4px; align-self: center; }
.taskbar > .grip { margin: 0 8px 0 13px; }
.tasks { display: flex; gap: 3px; }
.task { display: flex; align-items: center; justify-content: center; width: 59px; height: 38px; }
.task svg { width: 32px; height: 32px; }
.open { border: 1px solid #3f4c5d; border-radius: 3px; background: linear-gradient(135deg, #e2ebf6, #b2c6e0 60%, #b9cce4); box-shadow: inset 0 0 0 1px #d6e2f0; }
.lit { background: #e6eef8; }
.stack { width: 55px; margin-right: 4px; box-shadow: inset 0 0 0 1px #d6e2f0, 4px 0 0 -1px #c3d3e8, 5px 0 0 -1px #4b5869; }
.busy { background: linear-gradient(90deg, #5f9f62, #52e852 64%, #b9cce4 64%); }
.logo-letter { font: 700 15px "Open Sans", sans-serif; fill: #fff; text-anchor: middle; }
.tray { display: flex; align-items: center; margin-left: auto; font-family: Roboto, sans-serif; font-size: 12px; color: #fff; }
.tray .grip { margin-right: 12px; }
.lang { margin: 0 10px 5px 0; }
.kbd { width: 16px; height: 14px; margin-right: 12px; }
.arrow { width: 8px; height: 6px; margin-right: 14px; }
.tico { width: 16px; height: 16px; margin-right: 7px; }
.clock { display: flex; flex-direction: column; align-items: center; width: 56px; margin: 0 8px 0 2px; line-height: 17px; }
.desk { width: 14px; height: 38px; border: 1px solid #3c4a5c; background: linear-gradient(160deg, #8e9db0, #5c6d84 50%, #8294ab); }
```
FILE: script.js
```js
// date, IP, HWID, red HWID, type, monitor ok, Cramo id, company, location, site, linked site
const devices = [
  ["13.03.2020", "10.101.10.105", "861001004627762", 1, "TA", 1, "1064005", "Pylon Rakennus Oy", "VTT", "5085", 1],
  ["13.03.2020", "10.101.10.61", "861001004635856", 0, "KV", 1, "1064472", "Haahtela-rakennuttaminen Oy", "SO6.0", "4557", 0],
  ["11.03.2020", "10.101.9.151", "861001003587116", 1, "TA", 1, "1064035", "IKJ Rakennus Oy", "Ruomelantie 18", "5082", 1],
  ["11.03.2020", "10.101.9.85", "861001003592850", 0, "TA", 1, "1064043", "Louhintahiekka Oy", "APN1N ja TWY AV 2020", "5055", 0],
  ["11.03.2020", "10.101.10.238", "861001003584774", 0, "TA", 1, "1064103", "Louhintahiekka Oy", "APN1N ja TWY AV 2020", "5055", 0],
  ["10.03.2020", "10.101.10.58", "861001004635625", 0, "TA", 1, "1064138", "Pylon Rakennus Oy", "Kirkkokatu 3", "5079", 0],
  ["10.03.2020", "10.101.9.221", "861001004634289", 1, "TA", 0, "1064210", "Wärtsilä Finland Oy", "Hamina LNG", "3545", 0],
  ["10.03.2020", "10.101.9.243", "861001004605099", 0, "KV", 1, "1064478", "Wärtsilä Finland Oy", "Hamina LNG", "3545", 0],
  ["10.03.2020", "10.101.9.250", "861001004604993", 0, "KV", 1, "1064434", "Wärtsilä Finland Oy", "Hamina LNG", "3545", 0],
  ["10.03.2020", "10.101.9.167", "861001003597214", 0, "TA", 1, "1064046", "Wärtsilä Finland Oy", "Hamina LNG", "3545", 0],
  ["10.03.2020", "10.101.9.8", "861001003680275", 1, "TA", 1, "1064153", "Peab Oy", "As Oy Kuopion Hiihtäjä", "5077", 1],
  ["09.03.2020", "10.101.10.106", "861001004627572", 1, "TA", 1, "1064200", "Peab Oy", "As.Oy Pirkkalan Verde", "5023", 1],
  ["09.03.2020", "10.101.10.80", "861001004634222", 0, "TA", 1, "1064201", "Bravida Finland Oy", "As Oy Kaislakallio", "4884", 0],
  ["09.03.2020", "10.101.11.59", "861001003687601", 1, "TA", 0, "1064169", "Peab Oy", "Koy Espoon Swing Plus C", "5067", 1],
  ["08.03.2020", "10.101.9.59", "861001003562457", 1, "KV", 0, "1064448", "Skanska Talonrakennus Oy", "Lippulaiva Espoo", "4951", 1],
  ["05.03.2020", "10.101.8.227", "861001003685217", 1, "TA", 1, "1064105", "Tucasa Oy", "Senkkerin hallit", "5073", 1],
  ["05.03.2020", "10.101.9.240", "861001004591430", 0, "TA", 1, "1064071", "Tucasa Oy", "Kehä 4 center 2", "5070", 0],
  ["03.03.2020", "10.101.9.78", "861001003578479", 0, "TA", 1, "1064162", "Vahvaniska Oy", "Liusketie 20", "5058", 0],
  ["28.02.2020", "10.101.9.98", "861001003590151", 0, "TA", 1, "1064048", "Bravida Finland Oy", "As Oy Vaahtorinne 3", "5041", 0],
  ["28.02.2020", "10.101.11.20", "861001003585748", 0, "TA", 1, "1064002", "Louhintahiekka Oy", "APN1N ja TWY AV 2020", "5055", 0]
];
const icon = (cls, id) => `<svg class="${cls}"><use href="#${id}"/></svg>`;
document.getElementById("rows").innerHTML = devices.map(([date, ip, hwid, hot, type, ok, cramo, company, place, site, linked]) => `<tr>
<td class="mid"><a href="#">show</a> / <a href="#">edit</a></td><td class="mid">${date}</td><td>${ip}</td>
<td class="${hot ? "hot" : ""}">${hwid}</td><td class="mid ${type.toLowerCase()}"><b>${type}</b></td>
<td>190114</td><td>258-1</td><td>2.63-1</td><td>${ok ? icon("yes", "i-check") : icon("warn", "i-warn")}</td>
<td>${cramo}</td><td>${company}</td><td>${place}</td>
<td class="mid"><button class="mini site ${linked ? "linked" : ""}">${site}</button></td>
<td>${icon("eye comment", "i-eye")}</td><td>${icon("eye tech", "i-eye")}</td>
<td class="mid"><button class="mini show">Show</button></td></tr>`).join("");
```
